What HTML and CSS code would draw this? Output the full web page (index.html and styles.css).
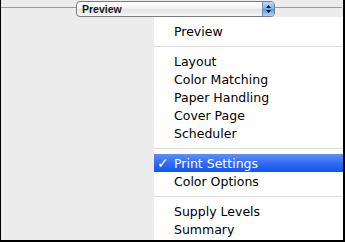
FILE: index.html
```html
<!DOCTYPE html>
<html>
<head>
  <title>Print Panes</title>
  <link rel="stylesheet" href="styles.css">
</head>
<body>
<div class="frame">
  <div class="header">
    <div class="rule rule-left"></div>
    <div class="popup">
      <span class="popup-label">Preview</span>
      <span class="stepper">
        <svg width="11" height="14" viewBox="0 0 11 14">
          <path d="M3 6 L5.5 3 L8 6 Z" fill="#111"/>
          <path d="M3 8 L5.5 11 L8 8 Z" fill="#111"/>
        </svg>
      </span>
    </div>
    <div class="rule rule-right"></div>
  </div>
  <div class="menu">
    <div class="item">Preview</div>
    <div class="sep"></div>
    <div class="item">Layout</div>
    <div class="item">Color Matching</div>
    <div class="item">Paper Handling</div>
    <div class="item">Cover Page</div>
    <div class="item">Scheduler</div>
    <div class="sep"></div>
    <div class="item selected"><span class="check">✓</span>Print Settings</div>
    <div class="item">Color Options</div>
    <div class="sep"></div>
    <div class="item">Supply Levels</div>
    <div class="item">Summary</div>
  </div>
</div>
</body>
</html>
```
FILE: styles.css
```css
body {
    margin: 0;
    font-family: "DejaVu Sans", "Liberation Sans", sans-serif;
  }
  .frame {
    width: 345px;
    height: 242px;
    box-sizing: border-box;
    background-color: #ececec;
    border-left: 1px solid #000;
    border-right: 2px solid #000;
    border-bottom: 2px solid #000;
    display: flex;
    flex-direction: column;
  }
  .header {
    height: 17px;
    padding-top: 1px;
    box-sizing: border-box;
    display: flex;
    align-items: flex-start;
  }
  .rule {
    height: 1px;
    margin-top: 6px;
    background-color: #9a9a9a;
  }
  .rule-left {
    width: 75px;
  }
  .rule-right {
    flex: 1;
    margin-right: 1px;
  }
  .popup {
    width: 199px;
    height: 16px;
    box-sizing: border-box;
    border: 1px solid #7c7c7c;
    border-radius: 4px;
    background: linear-gradient(#ffffff, #f3f3f3 45%, #e4e4e4 55%, #f7f7f7);
    display: flex;
    align-items: center;
    overflow: hidden;
  }
  .popup-label {
    flex: 1;
    padding-left: 5px;
    font-family: "Liberation Sans", sans-serif;
    font-weight: bold;
    font-size: 10.5px;
    color: #1a1a1a;
  }
  .stepper {
    width: 11px;
    height: 14px;
    border-left: 1px solid #6d8fc0;
    background: linear-gradient(#bcdaf8, #7fb4ef 45%, #5a9ce9 55%, #a9d4fa);
    display: flex;
  }
  .menu {
    flex: 1;
    margin-left: 153px;
    padding-top: 5px;
    background-color: #fff;
    display: flex;
    flex-direction: column;
  }
  .item {
    height: 18px;
    line-height: 19px;
    padding-left: 20px;
    font-size: 12.5px;
    color: #000;
    position: relative;
  }
  .selected {
    background: linear-gradient(#5f8ff8, #2a66f4 60%, #1257ef);
    color: #fff;
  }
  .check {
    position: absolute;
    left: 3px;
    top: 0;
    font-size: 14px;
    font-weight: bold;
  }
  .sep {
    height: 12px;
    display: flex;
    align-items: center;
  }
  .sep::after {
    content: "";
    flex: 1;
    height: 1px;
    background-color: #dcdcdc;
  }
```
